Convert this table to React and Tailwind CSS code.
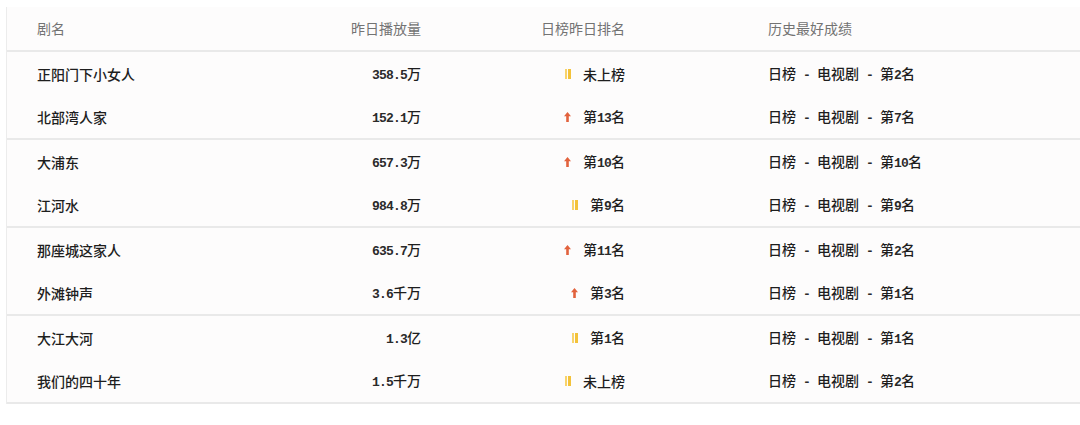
import React from 'react';

const ROWS = [
  { name: '正阳门下小女人', plays: '358.5万', trend: 'flat', rank: '未上榜', best: '日榜 - 电视剧 - 第2名' },
  { name: '北部湾人家', plays: '152.1万', trend: 'up', rank: '第13名', best: '日榜 - 电视剧 - 第7名' },
  { name: '大浦东', plays: '657.3万', trend: 'up', rank: '第10名', best: '日榜 - 电视剧 - 第10名' },
  { name: '江河水', plays: '984.8万', trend: 'flat', rank: '第9名', best: '日榜 - 电视剧 - 第9名' },
  { name: '那座城这家人', plays: '635.7万', trend: 'up', rank: '第11名', best: '日榜 - 电视剧 - 第2名' },
  { name: '外滩钟声', plays: '3.6千万', trend: 'up', rank: '第3名', best: '日榜 - 电视剧 - 第1名' },
  { name: '大江大河', plays: '1.3亿', trend: 'flat', rank: '第1名', best: '日榜 - 电视剧 - 第1名' },
  { name: '我们的四十年', plays: '1.5千万', trend: 'flat', rank: '未上榜', best: '日榜 - 电视剧 - 第2名' },
];

// ASCII runs get a narrow mono face so digits sit at half the CJK width
function Txt({ s }) {
  const parts = s.match(/[\x00-\x7f]+|[^\x00-\x7f]+/g) || [];
  return parts.map((p, i) =>
    /^[\x00-\x7f]/.test(p) ? (
      <span key={i} className="font-['Liberation_Mono'] font-bold text-[13px] tracking-[-0.8px] text-[#2a2a2a] whitespace-pre">{p}</span>
    ) : (
      <span key={i}>{p}</span>
    )
  );
}

function TrendIcon({ trend }) {
  if (trend === 'up') {
    return (
      <svg width="7" height="10" viewBox="0 0 7 10" className="shrink-0">
        <path d="M3.5 0 L7 4.2 L4.8 4.2 L4.8 10 L2.2 10 L2.2 4.2 L0 4.2 Z" fill="#e2623d" />
      </svg>
    );
  }
  return (
    <span className="flex gap-[1px] shrink-0">
      <span className="w-[2px] h-[10px] bg-[#f8d36a]" />
      <span className="w-[3px] h-[10px] bg-[#f3c23a]" />
    </span>
  );
}

function Row({ r, last }) {
  return (
    <div className={`flex items-center h-[44px] text-[14px] font-medium text-[#1e1e1e] ${last ? 'border-b-2 border-[#e9e9e9]' : ''}`}>
      <div className="w-[260px] pl-[30px]">{r.name}</div>
      <div className="w-[154px] text-right"><Txt s={r.plays} /></div>
      <div className="w-[204px] flex items-center justify-end">
        <TrendIcon trend={r.trend} />
        <span className="ml-[12px]"><Txt s={r.rank} /></span>
      </div>
      <div className="flex-1 pl-[143px]"><Txt s={r.best} /></div>
    </div>
  );
}

export default function App() {
  return (
    <div className="w-[1080px] h-[425px] bg-white pt-[7px] pl-[6px] font-['Noto_Sans_CJK_SC',sans-serif] overflow-hidden">
      <div className="bg-[#fdfcfc] border-l border-[#ececec]">
        <div className="flex items-center h-[45px] text-[14px] text-[#737373] border-b-2 border-[#e9e9e9]">
          <div className="w-[260px] pl-[30px]">剧名</div>
          <div className="w-[154px] text-right">昨日播放量</div>
          <div className="w-[204px] text-right">日榜昨日排名</div>
          <div className="flex-1 pl-[143px]">历史最好成绩</div>
        </div>
        {ROWS.map((r, i) => (
          <Row key={r.name} r={r} last={i % 2 === 1} />
        ))}
      </div>
    </div>
  );
}
